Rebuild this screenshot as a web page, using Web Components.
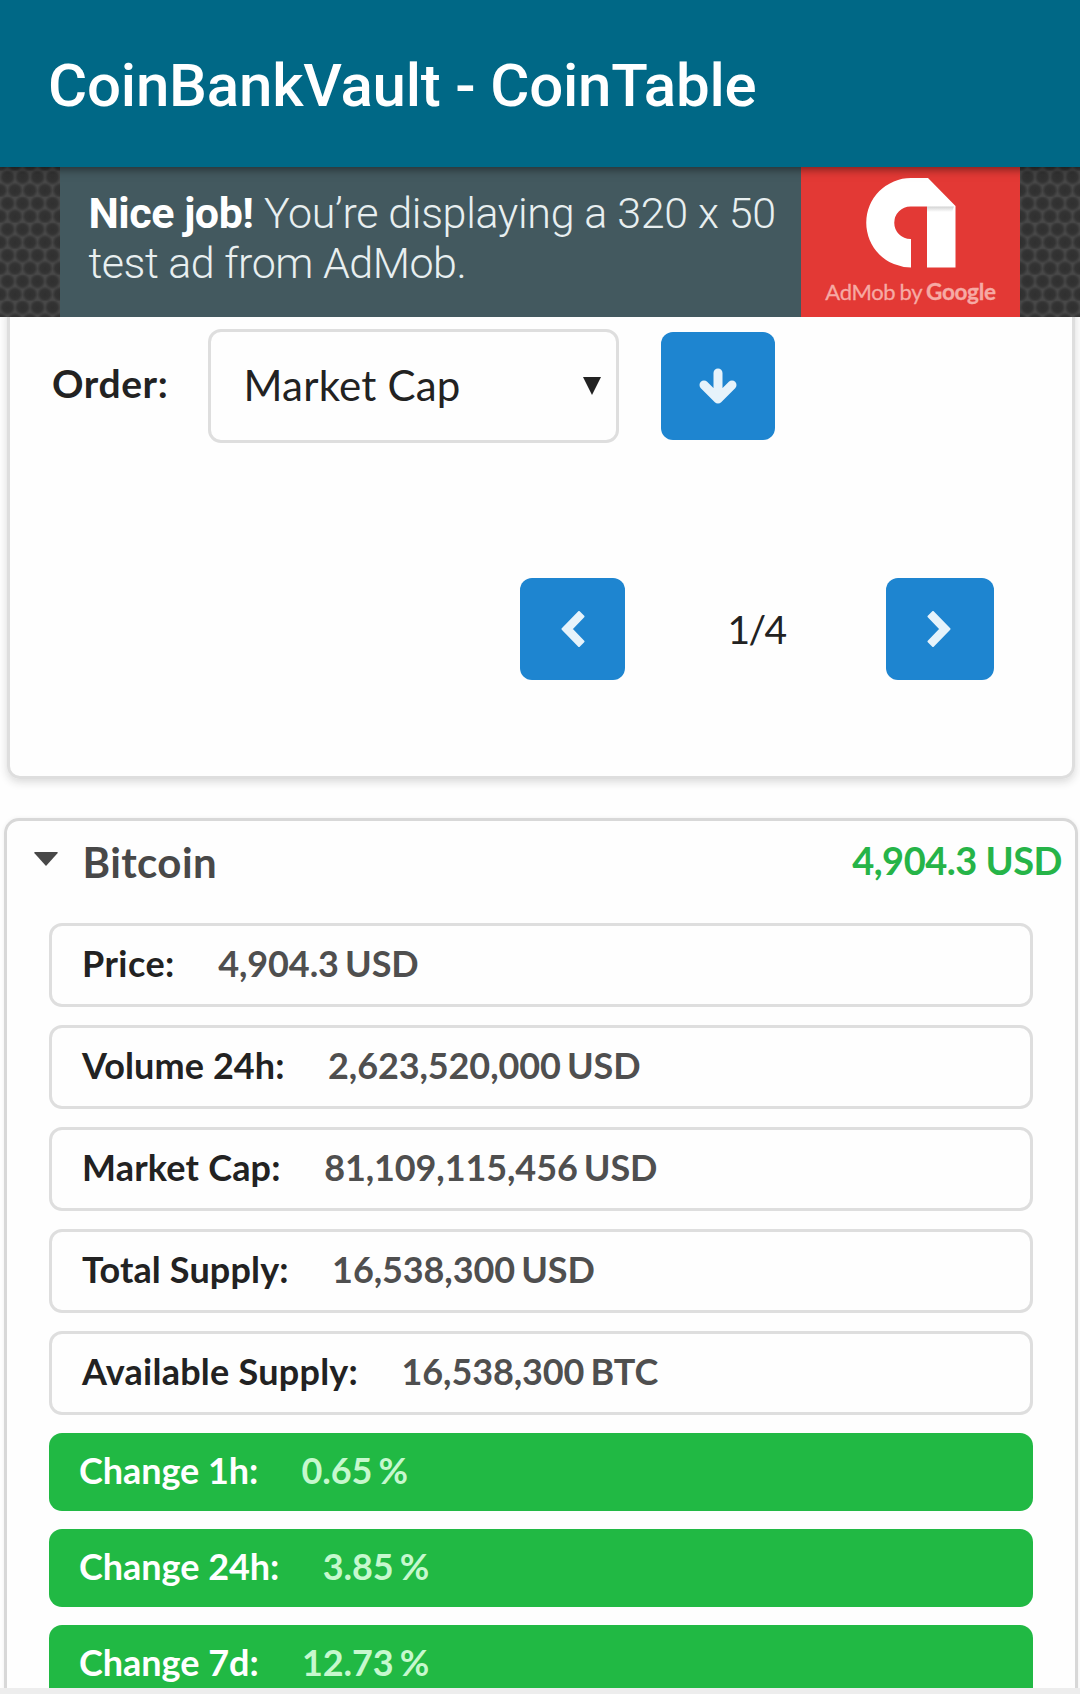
<!DOCTYPE html>
<html lang="en">
<head>
<meta charset="utf-8">
<title>CoinBankVault - CoinTable</title>
<style>
html,body{margin:0;padding:0;background:#fff}
body{width:1080px;height:1694px;overflow:hidden;font-family:Lato,sans-serif;color:#222}
</style>
</head>
<body>
<coin-app></coin-app>
<script>
const define = (name, html) => {
  const t = document.createElement('template');
  t.innerHTML = html;
  customElements.define(name, class extends HTMLElement {
    constructor() {
      super();
      this.attachShadow({ mode: 'open' }).appendChild(t.content.cloneNode(true));
    }
  });
};

define('app-header', `
<style>
:host{display:flex;align-items:center;height:167px;flex:none;box-sizing:border-box;padding:4px 48px 0;background:#006886;color:#fff;
  font:500 60px/70px Roboto,sans-serif;letter-spacing:-.2px;position:relative;z-index:2;box-shadow:0 2px 9px rgba(0,0,0,.5)}
</style><span><slot></slot></span>`);

define('ad-mesh', `
<style>:host{display:block;width:60px;height:150px;flex:none}svg{display:block}</style>
<svg width="60" height="150"><defs>
<radialGradient id="g"><stop offset="0" stop-color="#303030"/><stop offset=".6" stop-color="#333"/><stop offset="1" stop-color="#333" stop-opacity="0"/></radialGradient>
<pattern id="m" width="15" height="26" patternUnits="userSpaceOnUse" patternTransform="translate(0 3.8)"><rect width="15" height="26" fill="#484848"/><g fill="url(#g)"><circle cx="7.5" cy="6.5" r="8"/><circle cx="0" cy="19.5" r="8"/><circle cx="15" cy="19.5" r="8"/></g></pattern></defs>
<rect width="60" height="150" fill="url(#m)"/></svg>`);

define('ad-banner', `
<style>
:host{display:flex;height:150px;flex:none;position:relative;z-index:1;color:#fff;font-family:Roboto,sans-serif}
.copy{flex:1;background:#43595f;box-sizing:border-box;padding:21px 0 0 28.500px;font-size:43px;line-height:50px;font-weight:300;color:#e8eff0;white-space:nowrap}
.copy div{height:50px}
b{font-weight:700;color:#fff;letter-spacing:-.48px}
.l1{letter-spacing:-.33px}
.l2{letter-spacing:-.48px}
.brand{width:219px;flex:none;background:#e33935;display:flex;flex-direction:column;align-items:center}
.brand svg{display:block;margin:11px 0 0 0}
.by{font:400 22px/26px Lato,sans-serif;color:#f6aaa4;margin-top:11px;white-space:nowrap;letter-spacing:-.35px}
.by b{font-weight:700;color:#f6aaa4;letter-spacing:-.3px}
.by{-webkit-text-stroke:.3px #f6aaa4;word-spacing:-1px}
.by b{font-size:22.500px}
</style>
<ad-mesh></ad-mesh>
<div class="copy"><div><b>Nice job!</b> <span class="l1">You’re displaying a 320 x 50</span></div><div><span class="l2">test ad from AdMob.</span></div></div>
<div class="brand">
<svg width="90" height="90" viewBox="0 0 90 90"><defs><linearGradient id="f" x2="0" y2="1"><stop offset="0" stop-color="#d2d2d2"/><stop offset="1" stop-color="#fff"/></linearGradient></defs><path fill="#fff" d="M45 0H62L89.500 28V89.500H61V28.500H44.500A16.250 16.250 0 0 0 44.500 61H45V89.500A44.750 44.750 0 0 1 45 0Z"/><path d="M61 28.500H88L86 34H61Z" fill="url(#f)"/></svg>
<div class="by">AdMob by <b>Google</b></div>
</div>
<ad-mesh></ad-mesh>`);

define('icon-button', `
<style>
:host{display:flex;align-items:center;justify-content:center;background:#1e85d0;border-radius:12px;color:#e6f3fb;flex:none}
</style><slot></slot>`);

define('order-select', `
<style>
:host{display:flex;align-items:center;justify-content:space-between;box-sizing:border-box;width:411px;height:114px;border:3px solid #dedede;border-radius:13px;
 padding:0 15px 0 32.500px;font-size:42px;line-height:50px;letter-spacing:.2px;color:#222}
span{margin-top:-2px}
svg{display:block}
</style><span><slot></slot></span><svg width="18" height="18"><path d="M0 0H18L9 18Z" fill="#222"/></svg>`);

define('control-panel', `
<style>
:host{display:flex;flex-direction:column;box-sizing:border-box;flex:none;height:479px;margin:-17px 5px 0 7px;border:3px solid #dedede;border-radius:13px;box-shadow:0 3px 8px rgba(34,36,38,.17);padding:0 78px 96px 42px;justify-content:space-between}
.order{display:flex;align-items:center;margin-top:26px}
label{font-size:39px;font-weight:700;line-height:50px;width:156px;margin-top:-7px;letter-spacing:.6px}
.order icon-button{width:114px;height:108px;margin-left:42px}
.pager{display:flex;justify-content:flex-end;align-items:center}
.prev{width:105px;height:102px}.next{width:108px;height:102px}
.page{width:261px;text-align:center;font-size:39px;line-height:50px;letter-spacing:-1.700px;padding-left:2px;box-sizing:border-box}
svg{display:block}
.chev{fill:currentColor;stroke:currentColor;stroke-width:2;stroke-linejoin:round}
.prev svg{margin-left:1px}.next svg{margin-right:2px}
</style>
<div class="order"><label>Order:</label><order-select><span>Market Cap</span></order-select>
<icon-button><svg width="38" height="37" viewBox="0 0 38 37"><path d="M19 5V30M5 17L19 31L33 17" fill="none" stroke="currentColor" stroke-width="9" stroke-linecap="round" stroke-linejoin="round"/></svg></icon-button></div>
<div class="pager">
<icon-button class="prev"><svg class="chev" width="24" height="36" viewBox="0 0 24 36"><path d="M18 1L22.500 5.500L10.500 18L22.500 30.500L18 35L1.500 18Z"/></svg></icon-button>
<div class="page">1/4</div>
<icon-button class="next"><svg class="chev" width="24" height="36" viewBox="0 0 24 36"><path d="M6 1L1.500 5.500L13.500 18L1.500 30.500L6 35L22.500 18Z"/></svg></icon-button>
</div>`);

define('coin-stat', `
<style>
:host{display:flex;box-sizing:border-box;flex:none;border:3px solid #dedede;border-radius:13px;padding:19px 30px 23px;font-size:36px;line-height:36px;font-weight:700;color:#222;white-space:nowrap}
:host([up]){border:0;background:#21b944;color:#fff;--detail:#c6f8ce}
.k{letter-spacing:var(--track,0)}
.v{margin-left:43.400px;word-spacing:-2.500px;letter-spacing:-.1px;color:var(--detail,#4f4f4f)}
</style><span class="k"><slot name="label"></slot></span><span class="v"><slot></slot></span>`);

define('coin-card', `
<style>
:host{display:flex;flex-direction:column;box-sizing:border-box;flex:none;height:930px;margin:39px 2px 0 4px;border:3px solid #d8d8d8;border-radius:15px;box-shadow:0 0 4px rgba(0,0,0,.06);padding:0 42px 0 42px}
header{display:flex;align-items:center;height:102px;margin:0 -29px 0 -15px;padding-bottom:20px;box-sizing:border-box;font-weight:700;color:#484848;line-height:50px}
svg{display:block;margin-top:-7px}
.n{font-size:42px;margin-left:24.500px;flex:1;letter-spacing:.4px}
.p{font-size:38px;letter-spacing:-.5px;color:#26b448;margin-top:-4px}
.rows{display:flex;flex-direction:column;gap:18px}
</style>
<header><svg width="24" height="14"><path d="M1 0H23Q24.500 0 23.500 1.200L12 14L.5 1.200Q-.5 0 1 0Z" fill="#484848"/></svg><span class="n"><slot name="name"></slot></span><span class="p"><slot name="price"></slot></span></header>
<div class="rows"><slot></slot></div>`);

define('coin-app', `
<style>
:host{display:flex;flex-direction:column;height:1694px;overflow:hidden;background:#fefefe}
main{flex:1;min-height:0;overflow:hidden;display:flex;flex-direction:column}
footer{height:6px;flex:none;background:#ededed}
</style>
<app-header><span>CoinBankVault - CoinTable</span></app-header>
<ad-banner></ad-banner>
<main>
<control-panel></control-panel>
<coin-card>
<span slot="name">Bitcoin</span><span slot="price">4,904.3 USD</span>
<coin-stat style="--track:.45px"><span slot="label">Price:</span><span>4,904.3 USD</span></coin-stat>
<coin-stat style="--track:.1px"><span slot="label">Volume 24h:</span><span>2,623,520,000 USD</span></coin-stat>
<coin-stat style="--track:.2px"><span slot="label">Market Cap:</span><span>81,109,115,456 USD</span></coin-stat>
<coin-stat style="--track:.15px"><span slot="label">Total Supply:</span><span>16,538,300 USD</span></coin-stat>
<coin-stat style="--track:.25px"><span slot="label">Available Supply:</span><span>16,538,300 BTC</span></coin-stat>
<coin-stat up style="--track:-.06px"><span slot="label">Change 1h:</span><span>0.65 %</span></coin-stat>
<coin-stat up style="--track:-.03px"><span slot="label">Change 24h:</span><span>3.85 %</span></coin-stat>
<coin-stat up style="--track:-.03px"><span slot="label">Change 7d:</span><span>12.73 %</span></coin-stat>
</coin-card>
</main>
<footer></footer>`);
</script>
</body>
</html>
